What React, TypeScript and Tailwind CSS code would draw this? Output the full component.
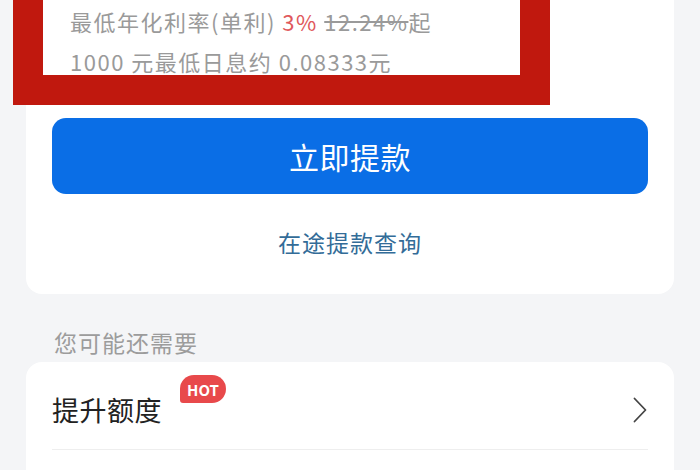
import React from "react";

const font = { fontFamily: '"Noto Sans CJK SC", "Noto Sans", sans-serif' };

export default function App() {
  return (
    <div className="relative w-[700px] h-[470px] overflow-hidden bg-[#f4f5f7]" style={font}>
      {/* loan summary card */}
      <div className="mx-[26px] rounded-b-2xl bg-white px-[26px] pb-[37px] pt-px">
        <div className="pl-[18px] text-[22px] leading-[40px] tracking-[1.5px] text-[#9a9a9a]">
          <div>
            最低年化利率(单利) <span className="text-[#e0585c]">3%</span>{" "}
            <span className="line-through">12.24%</span>起
          </div>
          <div>1000 元最低日息约 0.08333元</div>
        </div>

        <button className="mt-[37px] flex h-[76px] w-full items-center justify-center rounded-[14px] bg-[#0a6ee6] text-[30px] tracking-[0.5px] text-white">
          立即提款
        </button>

        <div className="mt-[33px] text-center text-[23px] leading-[30px] tracking-[1px] text-[#336c98]">在途提款查询</div>
      </div>

      {/* highlight frame */}
      <div className="absolute left-[13px] top-[-30px] h-[135px] w-[537px] border-[30px] border-[#c0180e]" />

      <div className="mt-[33px] pl-[54px] text-[23px] leading-[30px] tracking-[1px] text-[#9c9c9c]">您可能还需要</div>

      <div className="mx-[26px] mt-[5px] h-[200px] rounded-2xl bg-white px-[26px]">
        <div className="flex items-center justify-between border-b border-[#eeeeee] pb-[24px] pt-[33px]">
          <span className="relative text-[27px] leading-[30px] tracking-[0.5px] text-[#222222]">
            提升额度
            <span className="absolute left-[128px] top-[-20px] flex h-[28px] w-[46px] items-center justify-center rounded-[14px] rounded-bl-[3px] bg-[#e8494b] text-[15px] font-semibold leading-none tracking-normal text-white">
              HOT
            </span>
          </span>
          <svg width="14" height="26" viewBox="0 0 14 26" fill="none" className="mr-[1px]">
            <path d="M1.5 1.5 L12.5 13 L1.5 24.5" stroke="#444444" strokeWidth="1.8" strokeLinecap="round" strokeLinejoin="round" />
          </svg>
        </div>
      </div>
    </div>
  );
}
